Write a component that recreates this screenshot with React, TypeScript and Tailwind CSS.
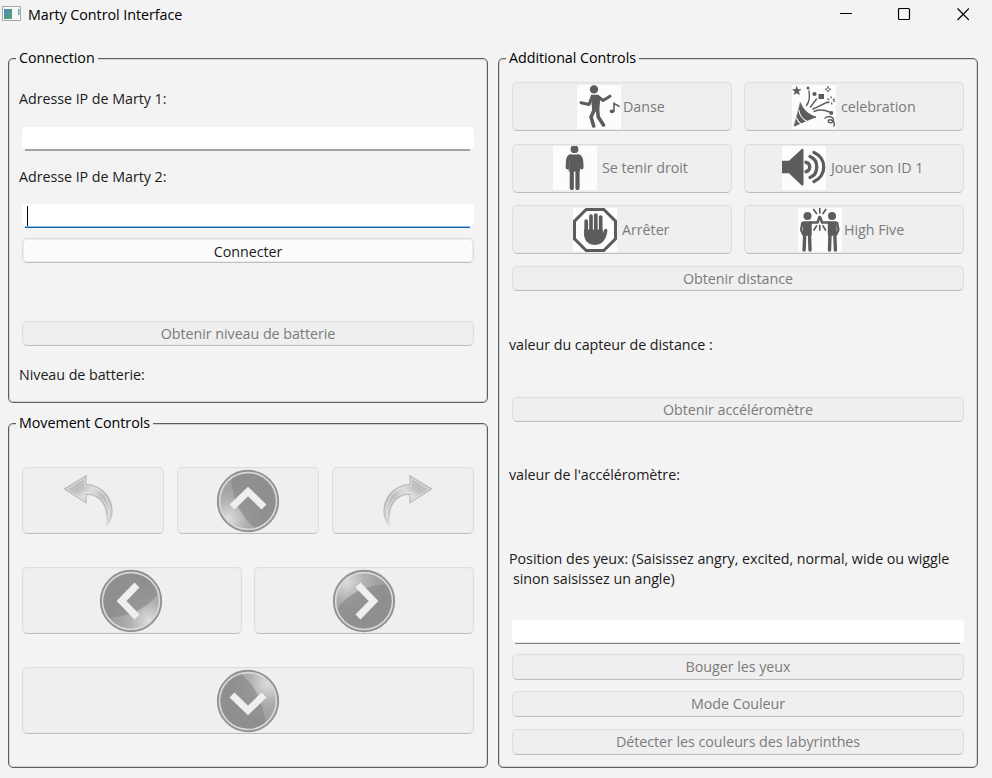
import type { ReactNode } from "react";

const INK = "#5c5c5c";

function Group({ title, className, children }: { title: string; className: string; children: ReactNode }) {
  return (
    <section className={`relative rounded-[5px] border border-[#606060] shadow-[inset_0_0_0_1px_#d2d2d2] ${className}`}>
      <h2 className="absolute -top-[11px] left-[7px] h-5 bg-[#f3f3f3] px-[3px] leading-5 text-black">{title}</h2>
      {children}
    </section>
  );
}

function Btn({ className, children }: { className: string; children?: ReactNode }) {
  return (
    <button
      className={`flex shrink-0 items-center rounded-[5px] border border-[#dedede] border-b-[#bebebe] bg-[#efefef] text-[#7b7b7b] shadow-[inset_0_0_0_1px_#ebebeb] ${className}`}
    >
      {children}
    </button>
  );
}

function Field({ line, caret, className }: { line: string; caret?: boolean; className: string }) {
  return (
    <div className={`flex h-6 shrink-0 flex-col ${className}`}>
      <div className="h-[22px] rounded-[4px] bg-white pl-[5px] pt-[2px]">
        {caret && <div className="h-5 w-px bg-black" />}
      </div>
      <div className={`ml-[3px] mr-1 h-[2px] ${line}`} />
    </div>
  );
}

function Tile({ children }: { children: ReactNode }) {
  return (
    <svg width="44" height="44" viewBox="0 0 44 44" className="shrink-0 bg-[#fcfcfc]" fill="none" stroke={INK} strokeLinecap="round" strokeLinejoin="round">
      {children}
    </svg>
  );
}

function DanceIcon() {
  return (
    <Tile>
      <circle cx="17" cy="4.4" r="4.2" fill={INK} stroke="none" />
      <path d="M14.5 10.5h6.5l1.5 3-1 12h-5.5l-.6-6z" fill={INK} strokeWidth="1.5" />
      <path d="M15 12l-3 7.5-8-1.8M21 11.500l5 4 7-4.300" strokeWidth="3" />
      <path d="M17.200 25l-3.200 7 2.700 9M20.500 25l.8 7 5.200 8" strokeWidth="3.600" />
      <path d="M37 26v-8c1 2.500 4 1.500 5 3.500" strokeWidth="1.600" />
      <ellipse cx="35" cy="26.300" rx="2.300" ry="1.900" fill={INK} stroke="none" />
    </Tile>
  );
}

function StandIcon() {
  return (
    <Tile>
      <circle cx="21.500" cy="3.200" r="3.900" fill={INK} stroke="none" />
      <path d="M16.500 9h10v16h-10z" fill={INK} strokeWidth="1" />
      <path d="M17.500 10.300c-2.800.8-3 4-3 11.500M25.500 10.300c2.800.8 3.200 4 3.200 11.500" strokeWidth="3.600" />
      <path d="M18.800 24v18M24.500 24v18" strokeWidth="4.200" />
    </Tile>
  );
}

function StopIcon() {
  return (
    <Tile>
      <path d="M13.200 1.500h17.600L42.500 13.200v17.600L30.800 42.500H13.200L1.500 30.800V13.200z" strokeWidth="3" strokeLinejoin="miter" />
      <path d="M13.200 13v15M18 8v18M22.800 7v18M27.700 9v18" strokeWidth="3.700" />
      <path d="M11.600 22h17.600v5l2.300-5c.7-1.600 2.700-1.200 2.500.8-.6 4-1.700 8-4.500 11-3.500 3.500-11.500 3.500-15 .3-2.400-2.300-2.900-6-2.900-12.100z" fill={INK} strokeWidth=".8" />
    </Tile>
  );
}

function PartyIcon() {
  return (
    <Tile>
      <path d="M4.700 1.300l1.200 3 3.200.2-2.500 2 .9 3.200-2.800-1.800-2.700 1.800.9-3.200-2.500-2 3.200-.2z" fill={INK} strokeWidth=".4" />
      <path d="M8.500 18c2 6 8 12 15.500 14l-9 3.500L2.500 41z" fill={INK} strokeWidth=".8" />
      <path d="M6.700 25c1 5 4 9.500 8.500 11.500M4.500 33c1 2.500 2.300 4.500 4.500 6" stroke="#fcfcfc" strokeWidth="1.100" />
      <path d="M14.500 20.500c3-4 3.500-8.500 2.500-14.500M18.500 22l6-8M21 24c5-1.500 9-5 15-7M22 26.500c6-2.500 11-1.500 15.500.5M33 33c3-2.500 8-1.500 8.500 1.500.4 3-4.500 4.500-5.200 2s3-2 4.700-.5 1.500 3.500 1 5" strokeWidth="1.400" />
      <circle cx="22.500" cy="9" r="2.100" fill={INK} stroke="none" />
      <path d="M26.500 9h5.500v5h-5.500z" fill={INK} stroke="none" />
      <circle cx="39.300" cy="28" r="2" fill={INK} stroke="none" />
      <circle cx="16" cy="3" r="1.500" fill={INK} stroke="none" />
      <path d="M36 1.500l.8 2 2.200.8-2.200.8-.8 2-.8-2-2.200-.8 2.200-.8z" strokeWidth=".8" />
      <circle cx="39" cy="15.500" r="3" strokeWidth="2" strokeDasharray="1.300 2" strokeLinecap="butt" />
    </Tile>
  );
}

function SpeakerIcon() {
  return (
    <Tile>
      <path d="M0 14.700h7L19.500 3.200c1-.8 2-.4 2 1v34c0 1.400-1 1.800-2 1L7 27.300H0z" fill={INK} stroke="none" />
      <path d="M24 16.300c5 1.200 5 8.200 0 9.400M28 10.500c9 3.500 9 17.500 0 21M32 6.500c13 5.500 13 23.500 0 29" strokeWidth="3.300" />
    </Tile>
  );
}

function HighFiveIcon() {
  const person = (
    <>
      <circle cx="9.500" cy="8" r="4" fill={INK} stroke="none" />
      <path d="M5.500 14h7.500v13H5.500z" fill={INK} strokeWidth="1.400" />
      <path d="M4.300 14.800l-1.300 7 2 4.500" strokeWidth="2.200" />
      <path d="M12.500 14.500h7l2-5.500" strokeWidth="2.600" />
      <path d="M6.700 26l-.6 16M11.500 26l.5 16" strokeWidth="3.400" />
      <path d="M15.700 1.500l2.800 4M18.500 18l-2.500 4" strokeWidth="1.700" />
    </>
  );
  return (
    <Tile>
      {person}
      <g transform="matrix(-1 0 0 1 43.500 0)">{person}</g>
      <path d="M21.800.8v4M21.800 17.500v4.500" strokeWidth="1.700" />
    </Tile>
  );
}

function Orb({ id, turn, light, chevron }: { id: string; turn: string; light: [number, number]; chevron: string }) {
  return (
    <svg width="64" height="64" viewBox="-32 -32 64 64" className="shrink-0">
      <defs>
        <radialGradient id={id} gradientUnits="userSpaceOnUse" cx={light[0]} cy={light[1]} r="38">
          <stop offset="0" stopColor="#dedede" />
          <stop offset=".5" stopColor="#b0b0b0" />
          <stop offset="1" stopColor="#9b9b9b" />
        </radialGradient>
        <clipPath id={`${id}-disc`}>
          <circle r="27.600" />
        </clipPath>
      </defs>
      <circle r="30.200" fill="#d8d8d8" stroke="#929292" strokeWidth="1.900" />
      <circle r="27.600" fill={`url(#${id})`} />
      <g clipPath={`url(#${id}-disc)`}>
        <path d="M-17-32C-18-4-8 18 14 32H32V-32z" fill="#8a8a8a" fillOpacity=".7" transform={turn} />
      </g>
      <path d={chevron} fill="none" stroke="#efefef" strokeWidth="7" />
    </svg>
  );
}

function CurvedArrow({ id, flip }: { id: string; flip?: boolean }) {
  return (
    <svg width="52" height="56" viewBox="0 0 52 56" className={flip ? "mt-[2px] -scale-x-100" : "mt-[2px]"}>
      <defs>
        <linearGradient id={id} x1="0" y1="0" x2=".7" y2="1">
          <stop offset="0" stopColor="#c8c8c8" />
          <stop offset=".32" stopColor="#bebebe" />
          <stop offset=".45" stopColor="#dedede" />
          <stop offset=".65" stopColor="#bababa" />
          <stop offset="1" stopColor="#d4d4d4" />
        </linearGradient>
        <linearGradient id={`${id}-edge`} x1="0" y1="0" x2="0" y2="1">
          <stop offset=".75" stopColor="#b9b9b9" />
          <stop offset="1" stopColor="#e8e8e8" />
        </linearGradient>
      </defs>
      <path d="M1.500 15L23 1.800v8.800c20 0 34 22 20.500 42.200C47 34 38 20 23 20.200v8.600z" fill={`url(#${id})`} stroke={`url(#${id}-edge)`} strokeWidth="1.100" />
      <path d="M4 15L21.700 4v8C39 11.500 50 28 45.500 44 46 29 37 18 21.700 18.700v8z" fill="none" stroke="#e6e6e6" strokeWidth=".8" />
    </svg>
  );
}

const label = "h-5 shrink-0 whitespace-nowrap pl-[10px] leading-5";

export default function App() {
  return (
    <div className="flex h-[778px] w-[992px] flex-col overflow-hidden bg-[#f3f3f3] font-['Open_Sans','Noto_Sans',sans-serif] text-[14.300px] tracking-[-0.045px] text-[#1b1b1b]">
      <header className="flex h-[30px] shrink-0 items-center pl-[2px] pr-[23px] text-black">
        <svg width="20" height="16" viewBox="0 0 20 16" className="mb-[2px]">
          <defs>
            <linearGradient id="app-pane" x1="0" y1="0" x2="1" y2="1">
              <stop offset="0" stopColor="#4e87b8" />
              <stop offset="1" stopColor="#55a56d" />
            </linearGradient>
          </defs>
          <path d="M.5.5h18v14H.500z" fill="#f8f8f8" stroke="#9ea8af" />
          <path d="M2 3h8v10H2z" fill="url(#app-pane)" />
          <path d="M16 3h1.500v6H16z" fill="#6cae9b" />
        </svg>
        <span className="ml-[6px] flex-1">Marty Control Interface</span>
        <svg width="130" height="14" viewBox="0 0 130 14" className="mb-[2px]" fill="none" stroke="#000">
          <path d="M1 6.500h12" />
          <rect x="59.500" y="1.500" width="11" height="11" rx="1" strokeWidth="1.200" />
          <path d="M118.500 1.500l11.500 11.500M130 1.500L118.500 13" strokeWidth="1.200" />
        </svg>
      </header>

      <main className="flex gap-[10px] pl-2 pt-7">
        <div className="flex w-[480px] flex-col gap-5">
          <Group title="Connection" className="flex h-[345px] flex-col">
            <p className={`${label} mt-[30px]`}>Adresse IP de Marty 1:</p>
            <Field line="bg-[#a2a2a2]" className="mx-[13px] mt-[18px]" />
            <p className={`${label} mt-4`}>Adresse IP de Marty 2:</p>
            <Field line="bg-[linear-gradient(#9cbfdc_50%,#0f62ad_50%)]" caret className="mx-[13px] mt-[17px]" />
            <Btn className="mx-[13px] mt-[10px] h-[25px] justify-center bg-[#fbfbfb]! pt-[2px] text-[#1b1b1b]!">Connecter</Btn>
            <Btn className="mx-[13px] mt-[58px] h-[25px] justify-center">Obtenir niveau de batterie</Btn>
            <p className={`${label} mt-[19px]`}>Niveau de batterie:</p>
          </Group>

          <Group title="Movement Controls" className="flex h-[345px] flex-col gap-[33px] px-[13px] pt-[43px]">
            <div className="grid grid-cols-3 gap-[13px]">
              <Btn className="h-[67px] pl-[40px]"><CurvedArrow id="turn-left" /></Btn>
              <Btn className="h-[67px] justify-center">
                <Orb id="orb-up" turn="" light={[-20, 18]} chevron="M-16 6L0-9.500 16 6" />
              </Btn>
              <Btn className="h-[67px] pl-[48px]"><CurvedArrow id="turn-right" flip /></Btn>
            </div>
            <div className="grid grid-cols-2 gap-3">
              <Btn className="h-[67px] justify-center pr-[2px]">
                <Orb id="orb-left" turn="rotate(-90)" light={[18, 20]} chevron="M6-16L-9.500 0 6 16" />
              </Btn>
              <Btn className="h-[67px] justify-center">
                <Orb id="orb-right" turn="rotate(90)" light={[-18, -20]} chevron="M-6-16L9.500 0-6 16" />
              </Btn>
            </div>
            <Btn className="h-[67px] justify-center">
              <Orb id="orb-down" turn="rotate(180)" light={[20, -18]} chevron="M-16-6L0 9.500 16-6" />
            </Btn>
          </Group>
        </div>

        <Group title="Additional Controls" className="flex h-[710px] w-[480px] flex-col">
          <div className="mx-[13px] mt-[23px] grid grid-cols-2 gap-x-3 gap-y-[12.500px]">
            <Btn className="h-[49px] gap-[2px] pl-16"><DanceIcon /><span>Danse</span></Btn>
            <Btn className="h-[49px] gap-[5px] pl-[47px]"><PartyIcon /><span>celebration</span></Btn>
            <Btn className="h-[49px] gap-[5px] pl-10"><StandIcon /><span>Se tenir droit</span></Btn>
            <Btn className="h-[49px] gap-[5px] pl-[37px]"><SpeakerIcon /><span>Jouer son ID 1</span></Btn>
            <Btn className="h-[49px] gap-[5px] pl-[60px]"><StopIcon /><span>Arrêter</span></Btn>
            <Btn className="h-[49px] gap-[2px] pl-[53px]"><HighFiveIcon /><span>High Five</span></Btn>
          </div>
          <Btn className="mx-[13px] mt-3 h-[25px] justify-center">Obtenir distance</Btn>
          <p className={`${label} mt-11`}>valeur du capteur de distance :</p>
          <Btn className="mx-[13px] mt-[42px] h-[25px] justify-center">Obtenir accéléromètre</Btn>
          <p className={`${label} mt-[43px]`}>valeur de l'accéléromètre:</p>
          <p className={`${label} mt-16`}>Position des yeux: (Saisissez angry, excited, normal, wide ou wiggle</p>
          <p className={`${label} pl-[14px]!`}>sinon saisissez un angle)</p>
          <Field line="bg-[linear-gradient(#e6e6e6_50%,#858585_50%)]" className="mx-[13px] mt-[31px]" />
          <Btn className="mx-[13px] mt-[10px] h-[26px] justify-center">Bouger les yeux</Btn>
          <Btn className="mx-[13px] mt-[11px] h-[26px] justify-center">Mode Couleur</Btn>
          <Btn className="mx-[13px] mt-3 h-[26px] justify-center">Détecter les couleurs des labyrinthes</Btn>
        </Group>
      </main>
    </div>
  );
}
